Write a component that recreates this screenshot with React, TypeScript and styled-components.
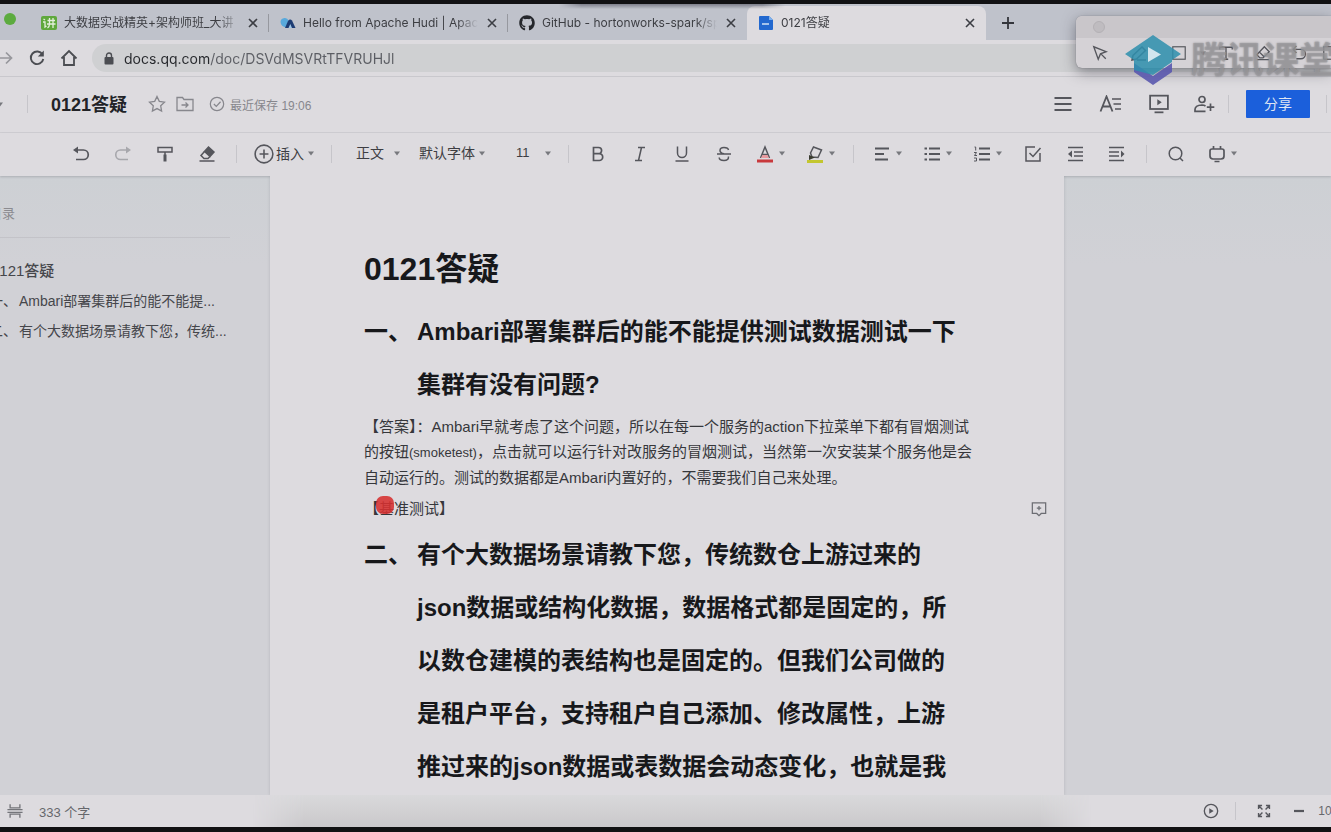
import React from 'react';
import styled, { createGlobalStyle, css } from 'styled-components';
import { FaGithub } from 'react-icons/fa';

const sans = `"Liberation Sans", "Noto Sans CJK SC", sans-serif`;
const chromeSans = `Inter, "Noto Sans CJK SC", sans-serif`;

const color = {
  bezel: '#111113',
  strip: '#bfc2cb',
  bar: '#dddbdf',
  pill: '#cfd0d2',
  line: '#c9c8cd',
  canvas: '#d1d1d6',
  icon: '#55565c',
  soft: '#87878d',
  text: '#3d3e43',
  ink: '#17181b',
  blue: '#1b5fdb',
};

const GlobalStyle = createGlobalStyle`
  *, *::before, *::after { box-sizing: border-box; }
  body { margin: 0; font-family: ${sans}; color: ${color.text}; background: ${color.bezel}; }
  button, select, input { font: inherit; color: inherit; border: 0; padding: 0; background: none; }
  button { cursor: pointer; }
  a { color: inherit; text-decoration: none; }
  h1, h2, p, ul { margin: 0; padding: 0; }
`;

const Screen = styled.div`
  position: relative;
  display: flex;
  flex-direction: column;
  height: 100vh;
  overflow: hidden;
  border-top: 4px solid ${color.bezel};
  border-bottom: 5px solid ${color.bezel};
  background: ${color.bar};
`;

/* ---------- browser chrome ---------- */

const TabStrip = styled.header`
  display: flex;
  align-items: flex-end;
  flex: none;
  height: 36px;
  background: ${color.strip};
  font-family: ${chromeSans};
  font-size: 12px;
`;

const WindowControls = styled.div`
  display: flex;
  align-items: center;
  flex: none;
  width: 30px;
  height: 30px;
  padding-left: 4px;
`;

const ZoomLight = styled.button`
  width: 12px;
  height: 12px;
  margin-bottom: 12px;
  border-radius: 50%;
  background: #5cab3f;
`;

const Tab = styled.div<{ $active?: boolean; $divided?: boolean }>`
  display: flex;
  align-items: center;
  gap: 7px;
  flex: 0 1 239px;
  min-width: 0;
  height: 34px;
  padding: 0 9px 0 11px;
  border-radius: 8px 8px 0 0;
  ${(p) => p.$active && css`background: ${color.bar};`}
  ${(p) =>
    p.$divided &&
    css`
      border-radius: 0;
      background: linear-gradient(#96989f, #96989f) right center / 1px 18px no-repeat;
    `}
`;

const TabTitle = styled.button`
  flex: 1;
  min-width: 0;
  height: 20px;
  overflow: hidden;
  white-space: nowrap;
  text-align: left;
  line-height: 18px;
  mask-image: linear-gradient(to right, #000 88%, transparent);
`;

const TabIcon = styled.span`
  display: flex;
  flex: none;
  width: 16px;
  justify-content: center;
`;

const TabClose = styled.button`
  display: flex;
  justify-content: center;
  flex: none;
  width: 14px;
`;

const NewTab = styled.button`
  display: flex;
  align-items: center;
  justify-content: center;
  flex: none;
  width: 44px;
  height: 34px;
`;

const AddressRow = styled.div`
  display: flex;
  align-items: center;
  flex: none;
  height: 37px;
  border-bottom: 1px solid ${color.line};
`;

const NavButtons = styled.div`
  display: flex;
  flex: none;
  margin-left: -11px;
  padding-right: 7px;
`;

const NavButton = styled.button`
  display: flex;
  align-items: center;
  justify-content: center;
  width: 32px;
  height: 28px;
`;

const AddressPill = styled.label`
  display: flex;
  align-items: center;
  gap: 10px;
  flex: 1;
  height: 28px;
  padding-left: 12px;
  border-radius: 14px 0 0 14px;
  background: ${color.pill};
`;

const AddressInput = styled.input`
  flex: 1;
  height: 24px;
  outline: 0;
  font-family: ${chromeSans};
  font-size: 14px;
  color: #33353a;
  background: linear-gradient(to right, #26282c 86px, #5b5d63 86px);
  background-clip: text;
  -webkit-text-fill-color: transparent;
`;

/* ---------- document header ---------- */

const DocHeader = styled.div`
  display: flex;
  align-items: center;
  flex: none;
  height: 56px;
  padding-bottom: 1px;
  border-bottom: 1px solid #d0cfd3;
`;

const HomeCaret = styled.button`
  display: flex;
  width: 27px;
  margin-left: -3px;
`;

const VLine = styled.span<{ $gap?: number }>`
  flex: none;
  width: 1px;
  height: 18px;
  margin: 0 ${(p) => p.$gap ?? 0}px;
  background: #c6c5ca;
`;

const DocTitle = styled.span`
  padding: 0 16px 2px 20px;
  font-size: 18px;
  font-weight: 700;
  color: #222327;
`;

const SmallButton = styled.button`
  display: flex;
  align-items: center;
  justify-content: center;
  width: 28px;
  height: 28px;
`;

const SaveState = styled.span`
  display: flex;
  align-items: center;
  gap: 5px;
  margin-left: 10px;
  font-size: 12px;
  color: ${color.soft};
`;

const HeaderActions = styled.div`
  display: flex;
  align-items: center;
  margin-left: auto;
  padding-right: 4px;
`;

const HeaderButton = styled.button<{ $w?: number }>`
  display: flex;
  align-items: center;
  justify-content: center;
  width: ${(p) => p.$w ?? 48}px;
  height: 32px;
`;

const ShareButton = styled.button`
  width: 64px;
  height: 28px;
  margin: 0 16px 0 14px;
  padding-bottom: 2px;
  border-radius: 1px;
  background: ${color.blue};
  color: #dfe5f3;
  font-size: 14px;
`;

/* ---------- formatting toolbar ---------- */

const Toolbar = styled.div`
  position: relative;
  display: flex;
  align-items: center;
  flex: none;
  height: 43px;
  padding: 0 0 2px 60px;
  font-size: 14px;
  box-shadow: 0 1px 2px rgba(60, 60, 70, 0.22);
`;

const Tool = styled.button`
  display: flex;
  align-items: center;
  justify-content: center;
  flex: none;
  width: 42px;
  height: 30px;
`;

const DropTool = styled(Tool)`
  justify-content: flex-start;
  gap: 5px;
  width: 50px;
  padding-left: 11px;
`;

const InsertTool = styled(Tool)`
  justify-content: flex-start;
  width: 78px;
  padding-left: 9px;
  gap: 2px;
`;

const InsertLabel = styled.span`
  padding: 0 2px 2px 0;
`;

const ToolLine = styled.span`
  display: flex;
  justify-content: center;
  flex: none;
  width: 17px;
`;

const SelectBox = styled.label<{ $w: number; $pad: number }>`
  display: flex;
  align-items: center;
  flex: none;
  width: ${(p) => p.$w}px;
  padding-left: ${(p) => p.$pad}px;
`;

const Select = styled.select<{ $w: number; $small?: boolean }>`
  width: ${(p) => p.$w}px;
  height: 24px;
  padding-bottom: 2px;
  appearance: none;
  outline: 0;
  font-size: ${(p) => (p.$small ? 13 : 14)}px;
`;

/* ---------- workspace ---------- */

const Workspace = styled.div`
  display: grid;
  grid-template-columns: 270px minmax(0, 794px) 1fr;
  flex: 1;
  min-height: 0;
  overflow: hidden;
  background: linear-gradient(to bottom, #cdd0d4, ${color.canvas} 90px);
`;

const Outline = styled.nav`
  width: 241px;
  margin-left: -11px;
  padding-top: 26px;
  font-size: 14px;
  line-height: 30px;
  color: #45464b;
`;

const OutlineLabel = styled.div`
  height: 36px;
  margin-bottom: 18px;
  border-bottom: 1px solid #c3c3c8;
  font-size: 13px;
  line-height: 24px;
  color: #8b8b90;
`;

const OutlineTitle = styled.a`
  display: block;
  padding-left: 2px;
  font-size: 15px;
  font-weight: 500;
`;

const OutlineItem = styled.a`
  display: grid;
  grid-template-columns: 30px 1fr;
  white-space: nowrap;
`;

const Sheet = styled.main`
  position: relative;
  padding: 64px 80px 0 94px;
  background: #dddbdf;
  box-shadow: 0 0 3px rgba(70, 70, 80, 0.2);
  color: ${color.ink};
`;

const Title = styled.h1`
  padding-bottom: 3px;
  font-size: 32px;
  line-height: 58px;
`;

const Question = styled.h2`
  display: grid;
  grid-template-columns: 53px minmax(0, 544px);
  padding-top: 4px;
  font-size: 24px;
  line-height: 53px;
`;

const Answer = styled.p`
  padding: 3px 0;
  font-size: 15px;
  line-height: 25px;
  color: #36373b;
`;

const Term = styled.span`
  font-size: 13px;
`;

const Marked = styled.span`
  position: relative;
`;

const Pointer = styled.span`
  position: absolute;
  top: -4px;
  left: -3px;
  width: 18px;
  height: 18px;
  border-radius: 7px;
  background: rgba(214, 48, 48, 0.88);
`;

const CommentButton = styled.button`
  position: absolute;
  top: 325px;
  right: 17px;
  display: flex;
`;

/* ---------- status bar ---------- */

const StatusBar = styled.footer`
  position: relative;
  display: flex;
  align-items: center;
  flex: none;
  height: 32px;
  padding-left: 7px;
  font-size: 13px;
  color: #66676c;
  background: ${color.bar};

  &::before {
    content: '';
    position: absolute;
    inset: 0 18% 0 19%;
    background: linear-gradient(#d9d9db, #cac8cb);
    mask-image: linear-gradient(to right, transparent, #000 6%, #000 94%, transparent);
  }
`;

const WordCount = styled.span`
  padding-left: 16px;
`;

const StatusActions = styled.div`
  display: flex;
  align-items: center;
  margin-left: auto;
  margin-right: -18px;
  font-size: 12px;
`;

const StatusButton = styled.button<{ $w: number }>`
  display: flex;
  align-items: center;
  justify-content: center;
  width: ${(p) => p.$w}px;
  height: 24px;
`;

/* ---------- floating annotation palette ---------- */

const Palette = styled.aside`
  position: absolute;
  top: 12px;
  right: 0;
  width: 255px;
  height: 52px;
  border-radius: 6px 0 0 6px;
  background: #d5d2d6;
  box-shadow: 0 4px 14px rgba(50, 50, 60, 0.5), 0 0 1px rgba(50, 50, 60, 0.6);
`;

const PaletteTitle = styled.div`
  display: flex;
  align-items: center;
  height: 22px;
  padding-left: 17px;
  border-radius: 6px 0 0 0;
  background: #c9c6ca;
`;

const PaletteDot = styled.button`
  width: 12px;
  height: 12px;
  border: 1px solid #b4b1b5;
  border-radius: 50%;
  background: #bfbcc0;
`;

const PaletteTools = styled.div`
  display: flex;
  align-items: center;
  height: 30px;
  padding-left: 4px;
  overflow: hidden;
`;

const PaletteTool = styled.button<{ $w: number }>`
  display: flex;
  align-items: center;
  justify-content: center;
  flex: none;
  width: ${(p) => p.$w}px;
  height: 24px;
`;

const Watermark = styled.div`
  position: absolute;
  top: 28px;
  right: -4px;
  display: flex;
  align-items: center;
  gap: 9px;
  font-size: 36px;
  line-height: 54px;
  font-weight: 700;
  color: rgba(158, 157, 160, 0.7);
  text-shadow: 0 0 2px rgba(95, 95, 100, 0.6);
  pointer-events: none;
`;

const WatermarkText = styled.span`
  padding-top: 2px;
`;

const TopShade = styled.div`
  position: absolute;
  top: 0;
  left: 42%;
  right: 41%;
  height: 5px;
  background: linear-gradient(rgba(80, 82, 95, 0.6), rgba(80, 82, 95, 0));
  mask-image: linear-gradient(to right, transparent, #000 10%, #000 90%, transparent);
`;

/* ---------- drawings ---------- */

type IconProps = { size?: number; stroke?: string; sw?: number; children: React.ReactNode };

const Icon = ({ size = 18, stroke = color.icon, sw = 1.5, children }: IconProps) => (
  <svg width={size} height={size} viewBox="0 0 18 18" fill="none" stroke={stroke} strokeWidth={sw} aria-hidden="true">
    {children}
  </svg>
);

const Caret = () => (
  <svg width="6" height="5" viewBox="0 0 6 5" aria-hidden="true">
    <path d="M0 0.5h6L3 4.5z" fill="#77787d" />
  </svg>
);

const Cross = () => (
  <svg width="10" height="10" viewBox="0 0 10 10" stroke="#3c3e44" strokeWidth="1.6" aria-hidden="true">
    <path d="M1 1l8 8M9 1l-8 8" />
  </svg>
);

const CourseIcon = () => (
  <svg width="16" height="14" viewBox="0 0 16 14" aria-hidden="true">
    <rect width="16" height="14" rx="2" fill="#5fa83c" />
    <path d="M2.5 3l1.5 1M2 6h2v5l1.5-1M6.500 4.500h7.500M6 8h8.500M8.500 2v6q0 2.500-2 4M12 2v10" stroke="#e4efdc" strokeWidth="1.300" fill="none" />
  </svg>
);

const HudiIcon = () => (
  <svg width="16" height="12" viewBox="0 0 16 12" aria-hidden="true">
    <path d="M0.500 5Q0.500 1.500 4.500 1q3-.3 4 2.500L6 10.500Q1 9.500 0.500 5z" fill="#58a9dc" />
    <path d="M5 11L8 4Q10 1.500 12 3.500L15.500 11z" fill="#1d3c74" />
    <path d="M8.500 11l1.800-4 1.700 4z" fill="#9fc6e6" />
  </svg>
);

const DocIcon = () => (
  <svg width="14" height="14" viewBox="0 0 14 14" aria-hidden="true">
    <path d="M1 0h9l4 4v9a1 1 0 0 1-1 1H1a1 1 0 0 1-1-1V1a1 1 0 0 1 1-1z" fill="#2268cf" />
    <path d="M10 0l4 4h-4z" fill="#7fb2ee" />
    <path d="M3 8h7" stroke="#cfe0f5" strokeWidth="1.500" />
  </svg>
);

const ClassroomLogo = () => (
  <svg width="58" height="52" viewBox="0 0 58 52" aria-hidden="true">
    <path d="M10 29v9l19 13 19-13v-9L29 42z" fill="#5a58ae" fillOpacity="0.9" />
    <path d="M29 1L57 20 48 26v2L29 41 10 36V26L1 20z" fill="#2f8fae" fillOpacity="0.86" />
    <path d="M24 13v15l13-7.500z" fill="#d3e6ee" />
  </svg>
);

const App = () => (
  <>
    <GlobalStyle />
    <Screen>
      <TabStrip>
        <WindowControls>
          <ZoomLight aria-label="缩放窗口" />
        </WindowControls>
        <Tab $divided>
          <TabIcon><CourseIcon /></TabIcon>
          <TabTitle>大数据实战精英+架构师班_大讲</TabTitle>
          <TabClose aria-label="关闭标签页"><Cross /></TabClose>
        </Tab>
        <Tab $divided>
          <TabIcon><HudiIcon /></TabIcon>
          <TabTitle>Hello from Apache Hudi | Apache</TabTitle>
          <TabClose aria-label="关闭标签页"><Cross /></TabClose>
        </Tab>
        <Tab>
          <TabIcon><FaGithub size={16} color="#25272c" /></TabIcon>
          <TabTitle>GitHub - hortonworks-spark/spark</TabTitle>
          <TabClose aria-label="关闭标签页"><Cross /></TabClose>
        </Tab>
        <Tab $active>
          <TabIcon><DocIcon /></TabIcon>
          <TabTitle>0121答疑</TabTitle>
          <TabClose aria-label="关闭标签页"><Cross /></TabClose>
        </Tab>
        <NewTab aria-label="新建标签页">
          <svg width="12" height="12" viewBox="0 0 12 12" stroke="#33353b" strokeWidth="1.800">
            <path d="M6 0v12M0 6h12" />
          </svg>
        </NewTab>
      </TabStrip>

      <AddressRow>
        <NavButtons>
          <NavButton aria-label="前进">
            <Icon stroke="#97979c" sw={1.7}><path d="M2 9h13M10 3.500L15.500 9 10 14.500" /></Icon>
          </NavButton>
          <NavButton aria-label="重新加载">
            <Icon stroke="#4b4d52" sw={1.9}>
              <path d="M14.500 5.500A6.300 6.300 0 1 0 15.300 10" />
              <path d="M15.800 1.500v6h-6z" fill="#4b4d52" stroke="none" />
            </Icon>
          </NavButton>
          <NavButton aria-label="主页">
            <Icon stroke="#4b4d52" sw={1.8}><path d="M1.500 9.500L9 2l7.500 7.500M4 8v8h10V8" /></Icon>
          </NavButton>
        </NavButtons>
        <AddressPill>
          <svg width="10" height="13" viewBox="0 0 10 13" aria-hidden="true">
            <rect x="0.500" y="5" width="9" height="7.500" rx="1" fill="#4b4d52" />
            <path d="M2.500 5V3.500a2.500 2.500 0 0 1 5 0V5" fill="none" stroke="#4b4d52" strokeWidth="1.400" />
          </svg>
          <AddressInput aria-label="地址" defaultValue="docs.qq.com/doc/DSVdMSVRtTFVRUHJl" />
        </AddressPill>
      </AddressRow>

      <DocHeader>
        <HomeCaret aria-label="菜单"><Caret /></HomeCaret>
        <VLine $gap={3} />
        <DocTitle>0121答疑</DocTitle>
        <SmallButton aria-label="收藏">
          <Icon stroke={color.soft} sw={1.3}>
            <path d="M9 1.500l2.300 4.900 5.200.7-3.800 3.700.9 5.300L9 13.600l-4.600 2.500.9-5.300L1.500 7.100l5.200-.7z" />
          </Icon>
        </SmallButton>
        <SmallButton aria-label="移动到">
          <Icon stroke={color.soft} sw={1.3}>
            <path d="M1 2.500h5.500l1.500 2h9V15.500H1zM5.500 10h6M9.500 7.500l2.500 2.500-2.500 2.500" />
          </Icon>
        </SmallButton>
        <SaveState>
          <Icon size={16} stroke={color.soft} sw={1.4}>
            <circle cx="9" cy="9" r="7.500" />
            <path d="M5.500 9l2.700 2.700L13 6.500" />
          </Icon>
          最近保存 19:06
        </SaveState>
        <HeaderActions>
          <HeaderButton aria-label="菜单">
            <Icon sw={2}><path d="M0.500 3h17M0.500 9h17M0.500 15h17" /></Icon>
          </HeaderButton>
          <HeaderButton aria-label="文字样式">
            <svg width="24" height="18" viewBox="0 0 24 18" fill="none" stroke={color.icon} strokeWidth="1.800" aria-hidden="true">
              <path d="M1.500 16.500L7.500 1.500l6 15M3.500 11.500h8" />
              <path d="M13 4h9M14.500 9H22M16 14h6" strokeWidth="1.500" />
            </svg>
          </HeaderButton>
          <HeaderButton aria-label="演示">
            <Icon size={20} sw={1.6}>
              <rect x="1" y="1.500" width="16" height="12" />
              <path d="M5 16.500h8" />
              <path d="M7.500 4.800v5.400L11.500 7.500z" fill={color.icon} stroke="none" />
            </Icon>
          </HeaderButton>
          <HeaderButton $w={42} aria-label="添加协作者">
            <svg width="22" height="18" viewBox="0 0 22 18" fill="none" stroke={color.icon} strokeWidth="1.700" aria-hidden="true">
              <circle cx="9" cy="4.500" r="3" />
              <path d="M12.500 11Q11 10 9 10q-7 .3-7 4.500v1.800h10.500M17.500 8.500v7.500M13.800 12.200h7.500" />
            </svg>
          </HeaderButton>
          <VLine $gap={3} />
          <ShareButton>分享</ShareButton>
          <VLine />
        </HeaderActions>
      </DocHeader>

      <Toolbar>
        <Tool aria-label="撤销">
          <Icon sw={1.7}>
            <path d="M3 5h8.500a4.500 4.500 0 0 1 0 9.500H4" />
            <path d="M6 1.500v7L1 5z" fill={color.icon} stroke="none" />
          </Icon>
        </Tool>
        <Tool aria-label="重做">
          <Icon stroke="#a7a7ac" sw={1.6}>
            <path d="M15 5H6.500a4.500 4.500 0 0 0 0 9.500H14" />
            <path d="M12 1.500v7L17 5z" fill="#a7a7ac" stroke="none" />
          </Icon>
        </Tool>
        <Tool aria-label="格式刷">
          <Icon>
            <path d="M2 2.500h14v4.500H2zM9 7v3" />
            <path d="M9 9.500v7" strokeWidth="3" />
          </Icon>
        </Tool>
        <Tool aria-label="清除格式">
          <Icon>
            <path d="M10.500 2l5.500 5-4 4.500-5.500-5z" fill={color.icon} />
            <path d="M6.500 6.500L3 10.500l3 3h4l2-2M1.500 16h15" />
          </Icon>
        </Tool>
        <ToolLine><VLine /></ToolLine>
        <InsertTool>
          <Icon size={20} sw={1.4}>
            <circle cx="9" cy="9" r="8" />
            <path d="M9 5v8M5 9h8" />
          </Icon>
          <InsertLabel>插入</InsertLabel>
          <Caret />
        </InsertTool>
        <ToolLine><VLine /></ToolLine>
        <SelectBox $w={70} $pad={16}>
          <Select $w={38} aria-label="段落样式"><option>正文</option></Select>
          <Caret />
        </SelectBox>
        <SelectBox $w={84} $pad={9}>
          <Select $w={60} aria-label="字体"><option>默认字体</option></Select>
          <Caret />
        </SelectBox>
        <SelectBox $w={66} $pad={22}>
          <Select $w={29} $small aria-label="字号"><option>11</option></Select>
          <Caret />
        </SelectBox>
        <ToolLine><VLine /></ToolLine>
        <Tool aria-label="加粗">
          <Icon sw={1.7}><path d="M4.500 2.500h5a3.100 3.100 0 0 1 0 6.200h-5zM4.500 8.700h5.800a3.400 3.400 0 0 1 0 6.800H4.500z" /></Icon>
        </Tool>
        <Tool aria-label="斜体">
          <Icon><path d="M7 2.500h7M4 15.500h7M10.500 2.500l-3 13" /></Icon>
        </Tool>
        <Tool aria-label="下划线">
          <Icon><path d="M4.500 1.500v6.500a4.500 4.500 0 0 0 9 0V1.500M2.500 16h13" /></Icon>
        </Tool>
        <Tool aria-label="删除线">
          <Icon><path d="M13.500 5Q13 2.500 9 2.500T5 5.500Q5 8 9 8.800M2 9h14M13.500 11.500q.3 4-4.500 4t-4.800-3" /></Icon>
        </Tool>
        <DropTool aria-label="字体颜色">
          <Icon>
            <path d="M4.500 13L9 2l4.500 11M6 9.500h6" />
            <path d="M5 13l1.500-3h5L13 13z" fill="#e79a9f" stroke="none" />
            <path d="M1 16h16" stroke="#c8393c" strokeWidth="3" />
          </Icon>
          <Caret />
        </DropTool>
        <DropTool aria-label="突出显示">
          <Icon>
            <path d="M1 16.500h16" stroke="#c3c62f" strokeWidth="3" />
            <path d="M7.500 2l8 3-3.500 7.500-6-.5-1.500-4z" />
            <path d="M3 10l6 2.500-6 2.500z" fill="#3a3c30" stroke="none" />
          </Icon>
          <Caret />
        </DropTool>
        <ToolLine><VLine /></ToolLine>
        <DropTool aria-label="对齐">
          <Icon sw={1.8}><path d="M2 3.500h14M2 9h9M2 14.500h13" /></Icon>
          <Caret />
        </DropTool>
        <DropTool aria-label="项目符号">
          <Icon sw={1.8}>
            <path d="M6 3.500h11M6 9h11M6 14.500h11" />
            <path d="M1.500 3.500h2.500M1.500 9h2.500M1.500 14.500h2.500" strokeWidth="2.200" />
          </Icon>
          <Caret />
        </DropTool>
        <DropTool aria-label="编号">
          <Icon sw={1.8}>
            <path d="M6 3.500h11M6 9h11M6 14.500h11" />
            <path d="M1.500 2h1.200v3.500M1 7.500h2.500l-2 3H4M1 13h2.500v3H1" strokeWidth="1" />
          </Icon>
          <Caret />
        </DropTool>
        <Tool aria-label="待办列表">
          <Icon><path d="M11 2H2v14h14V8M5.500 8l3.500 3.500L16.500 3" /></Icon>
        </Tool>
        <Tool aria-label="减少缩进">
          <Icon>
            <path d="M2 2.500h15M8 7h9M8 11h9M2 15.500h15" />
            <path d="M6 5.500v7L2 9z" fill={color.icon} stroke="none" />
          </Icon>
        </Tool>
        <Tool aria-label="增加缩进">
          <Icon>
            <path d="M1 2.500h15M1 7h10M1 11h10M1 15.500h15" />
            <path d="M13 5.500v7L16.500 9z" fill={color.icon} stroke="none" />
          </Icon>
        </Tool>
        <ToolLine><VLine /></ToolLine>
        <Tool aria-label="查找">
          <Icon><circle cx="8.500" cy="8.500" r="6.300" /><path d="M13 13l3 3" /></Icon>
        </Tool>
        <DropTool aria-label="插件">
          <Icon sw={1.7}>
            <path d="M4 4h10q2 0 2 2V11q0 3-3 3H5q-3 0-3-3V6q0-2 2-2zM5.500 1v3M12.500 1v3M6.500 16.500h5" />
          </Icon>
          <Caret />
        </DropTool>
      </Toolbar>

      <Workspace>
        <Outline aria-label="目录">
          <OutlineLabel>目录</OutlineLabel>
          <OutlineTitle href="#title">0121答疑</OutlineTitle>
          <OutlineItem href="#q1"><span>一、</span><span>Ambari部署集群后的能不能提...</span></OutlineItem>
          <OutlineItem href="#q2"><span>二、</span><span>有个大数据场景请教下您，传统...</span></OutlineItem>
        </Outline>
        <Sheet>
          <Title id="title">0121答疑</Title>
          <Question id="q1">
            <span>一、</span>
            <span>Ambari部署集群后的能不能提供测试数据测试一下集群有没有问题?</span>
          </Question>
          <Answer>
            【答案】：Ambari早就考虑了这个问题，所以在每一个服务的action下拉菜单下都有冒烟测试
            <br />
            的按钮<Term>(smoketest)</Term>，点击就可以运行针对改服务的冒烟测试，当然第一次安装某个服务他是会
            <br />
            自动运行的。测试的数据都是Ambari内置好的，不需要我们自己来处理。
          </Answer>
          <Answer>
            【<Marked>基<Pointer /></Marked>准测试】
          </Answer>
          <Question id="q2">
            <span>二、</span>
            <span>
              有个大数据场景请教下您，传统数仓上游过来的json数据或结构化数据，数据格式都是固定的，所以数仓建模的表结构也是固定的。但我们公司做的是租户平台，支持租户自己添加、修改属性，上游推过来的json数据或表数据会动态变化，也就是我
            </span>
          </Question>
          <CommentButton aria-label="添加评论">
            <Icon size={16} stroke="#6c6d73" sw={1.4}>
              <path d="M1.500 2h15v12h-5L9 16.500 6.500 14h-5zM9 5.500v5M6.500 8h5" />
            </Icon>
          </CommentButton>
        </Sheet>
      </Workspace>

      <StatusBar>
        <Icon size={16} stroke="#74757a">
          <path d="M3.500 1.500v4h11v-4M3.500 16.500v-4h11v4M0.500 7.500h17M0.500 10.500h17" />
        </Icon>
        <WordCount>333 个字</WordCount>
        <StatusActions>
          <StatusButton $w={24} aria-label="播放">
            <Icon size={16}>
              <circle cx="9" cy="9" r="7.500" />
              <path d="M7 5.800v6.400l5-3.200z" fill={color.icon} stroke="none" />
            </Icon>
          </StatusButton>
          <VLine $gap={12} />
          <StatusButton $w={32} aria-label="全屏">
            <Icon size={14} sw={1.8}>
              <path d="M2 6.500V2h4.500M2 2l5 5M11.500 2H16v4.500M16 2l-5 5M2 11.500V16h4.500M2 16l5-5M11.500 16H16v-4.500M16 16l-5-5" />
            </Icon>
          </StatusButton>
          <StatusButton $w={38} aria-label="缩小">
            <Icon size={10} sw={4}><path d="M0 9h18" /></Icon>
          </StatusButton>
          <span>100%</span>
        </StatusActions>
      </StatusBar>

      <TopShade />
      <Palette aria-label="批注工具">
        <PaletteTitle><PaletteDot aria-label="关闭" /></PaletteTitle>
        <PaletteTools>
          <PaletteTool $w={40} aria-label="选择">
            <Icon size={16}><path d="M2 2l5 14 2.500-6L16 7.500zM10 10l5.500 5.500" /></Icon>
          </PaletteTool>
          <PaletteTool $w={38} aria-label="画笔">
            <Icon size={18}><path d="M2 16l1-4.500L12 3l3.500 3.500-9 8.500zM7 16h9" /></Icon>
          </PaletteTool>
          <PaletteTool $w={42} aria-label="矩形">
            <Icon size={14}><rect x="1" y="1" width="16" height="16" /></Icon>
          </PaletteTool>
          <PaletteTool $w={6} aria-label="更多图形"><Caret /></PaletteTool>
          <PaletteTool $w={40} aria-label="文字">
            <Icon size={16}><path d="M2 5V2.500h14V5M9 2.500V16M6.500 16h5" /></Icon>
          </PaletteTool>
          <PaletteTool $w={34} aria-label="橡皮擦">
            <Icon size={16}><path d="M10.500 2L16 7.500 9 14.500H5.500L2 11zM5 8l5.500 5.500M2 16.500h14" /></Icon>
          </PaletteTool>
          <PaletteTool $w={38} aria-label="撤销">
            <Icon size={16}><path d="M6 1L2.500 5 6 9M3 5h8a4.500 4.500 0 0 1 0 10.500H6" /></Icon>
          </PaletteTool>
          <PaletteTool $w={24} aria-label="截图">
            <Icon size={14}><rect x="1" y="1" width="16" height="16" /></Icon>
          </PaletteTool>
        </PaletteTools>
      </Palette>
      <Watermark>
        <ClassroomLogo />
        <WatermarkText>腾讯课堂</WatermarkText>
      </Watermark>
    </Screen>
  </>
);

export default App;
